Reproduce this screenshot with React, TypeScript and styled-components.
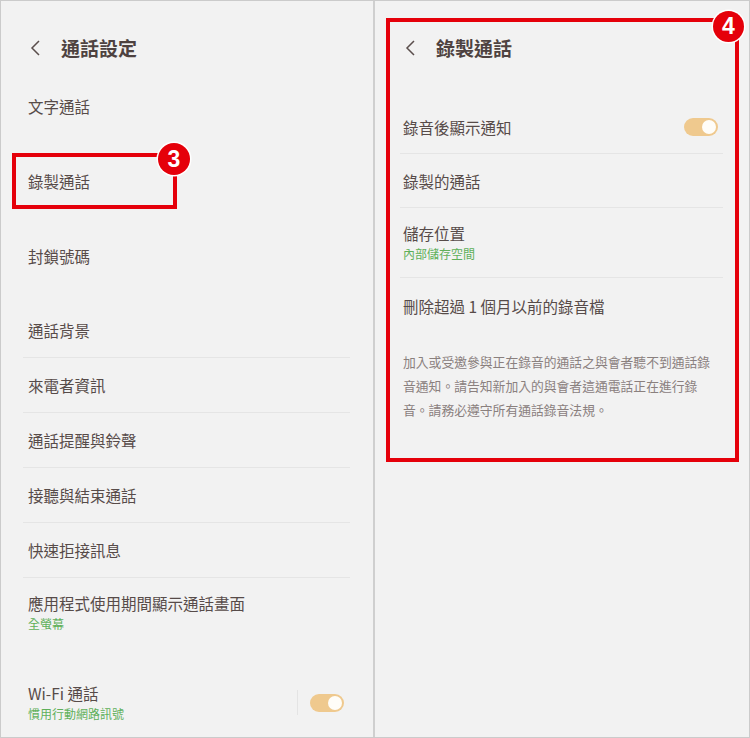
import React from 'react'
import styled, { createGlobalStyle } from 'styled-components'

const GlobalStyle = createGlobalStyle`
    html, body {
        margin: 0;
        padding: 0;
        background: #f2f2f2;
    }
    body {
        font-family: "Noto Sans CJK TC", "Noto Sans", sans-serif;
    }
`

interface RowProps {
    $h: number
    $line?: boolean
}

const leftItems = ['通話背景', '來電者資訊', '通話提醒與鈴聲', '接聽與結束通話', '快速拒接訊息']

const Back = () => (
    <svg width="11" height="16" viewBox="0 0 11 16">
        <polyline points="9,1 2,8 9,15" fill="none" stroke="#5a4e4c" strokeWidth="1.5" />
    </svg>
)

const Toggle = () => (
    <Track>
        <Knob />
    </Track>
)

const App = () => {
    return (
        <>
            <GlobalStyle />
            <Screen>
                <Panel>
                    <Header $pad={29}>
                        <Back />
                        <Title>通話設定</Title>
                    </Header>
                    <List>
                        <Group>
                            <Row $h={55}><Label>文字通話</Label></Row>
                        </Group>
                        <Group>
                            <Row $h={55}>
                                <Label>錄製通話</Label>
                                <Highlight />
                                <Badge $size={32} style={{ left: 135, top: -10 }}>3</Badge>
                            </Row>
                        </Group>
                        <Group>
                            <Row $h={55}><Label>封鎖號碼</Label></Row>
                        </Group>
                        <Group>
                            {leftItems.map(t => (
                                <Row key={t} $h={55} $line><Label>{t}</Label></Row>
                            ))}
                            <Row $h={70}>
                                <TextBlock>
                                    <Label>應用程式使用期間顯示通話畫面</Label>
                                    <Sub>全螢幕</Sub>
                                </TextBlock>
                            </Row>
                        </Group>
                        <Group>
                            <Row $h={69}>
                                <TextBlock>
                                    <Label>Wi-Fi 通話</Label>
                                    <Sub>慣用行動網路訊號</Sub>
                                </TextBlock>
                                <SwitchCell>
                                    <Toggle />
                                </SwitchCell>
                            </Row>
                        </Group>
                    </List>
                </Panel>
                <Split />
                <RightPanel>
                    <Frame>
                        <Badge $size={31} style={{ right: -9, top: -11 }}>4</Badge>
                        <Header $pad={15} $h={52}>
                            <Back />
                            <Title>錄製通話</Title>
                        </Header>
                        <RightList>
                            <Row $h={54} $line>
                                <Label>錄音後顯示通知</Label>
                                <Toggle />
                            </Row>
                            <Row $h={54} $line><Label>錄製的通話</Label></Row>
                            <Row $h={70} $line>
                                <TextBlock>
                                    <Label>儲存位置</Label>
                                    <Sub>內部儲存空間</Sub>
                                </TextBlock>
                            </Row>
                            <Row $h={56}><Label>刪除超過 1 個月以前的錄音檔</Label></Row>
                            <Note>
                                加入或受邀參與正在錄音的通話之與會者聽不到通話錄音通知。請告知新加入的與會者這通電話正在進行錄音。請務必遵守所有通話錄音法規。
                            </Note>
                        </RightList>
                    </Frame>
                </RightPanel>
            </Screen>
        </>
    )
}

export default App

const Screen = styled.div`
    display: flex;
    width: 750px;
    height: 738px;
    box-sizing: border-box;
    border: 1px solid #cbcbcb;
    background: #f2f2f2;
    overflow: hidden;
`

const Panel = styled.div`
    width: 372px;
    flex-shrink: 0;
    overflow: hidden;
`

const Split = styled.div`
    width: 2px;
    flex-shrink: 0;
    background: #cfcfcf;
`

const RightPanel = styled.div`
    flex: 1;
    padding: 17px 10px 0 11px;
`

const Header = styled.div<{ $pad: number, $h?: number }>`
    display: flex;
    align-items: center;
    gap: 20px;
    height: ${p => p.$h ?? 60}px;
    padding: ${p => p.$h ? 0 : 17}px 0 0 ${p => p.$pad}px;
    margin-bottom: ${p => p.$h ? 26 : 0}px;
`

const Title = styled.h1`
    margin: 0;
    font-size: 19px;
    font-weight: 700;
    color: #4e4240;
    line-height: 24px;
`

const List = styled.div`
    margin: 0 23px 0 22px;
`

const Group = styled.div`
    margin-bottom: 20px;

    &:last-child {
        margin-bottom: 0;
    }
`

const Row = styled.div<RowProps>`
    position: relative;
    display: flex;
    align-items: center;
    justify-content: space-between;
    box-sizing: border-box;
    height: ${p => p.$h}px;
    padding: 0 6px 0 5px;
    border-bottom: ${p => p.$line ? '1px solid #e5e5e5' : 'none'};
`

const Label = styled.div`
    font-size: 15.5px;
    line-height: 22px;
    color: #574b49;
    white-space: nowrap;
`

const TextBlock = styled.div`
    display: flex;
    flex-direction: column;
`

const Sub = styled.div`
    font-size: 12px;
    line-height: 20px;
    color: #5fb05a;
`

const SwitchCell = styled.div`
    display: flex;
    align-items: center;
    height: 25px;
    padding-left: 12px;
    border-left: 1px solid #e4e4e4;
`

const Track = styled.div`
    display: flex;
    align-items: center;
    justify-content: flex-end;
    width: 34px;
    height: 18px;
    box-sizing: border-box;
    padding-right: 2px;
    border-radius: 9px;
    background: #efc98e;
`

const Knob = styled.div`
    width: 14px;
    height: 14px;
    border-radius: 50%;
    background: #fffdf8;
`

const Highlight = styled.div`
    position: absolute;
    left: -11px;
    top: 0;
    width: 165px;
    height: 56px;
    box-sizing: border-box;
    border: 4px solid #e5000a;
`

const Badge = styled.div<{ $size: number }>`
    position: absolute;
    display: flex;
    align-items: center;
    justify-content: center;
    width: ${p => p.$size}px;
    height: ${p => p.$size}px;
    border-radius: 50%;
    background: #e5000a;
    box-shadow: 0 0 0 1.5px #fff;
    color: #fff;
    font-family: "Liberation Sans", Arial, sans-serif;
    font-weight: 700;
    font-size: 23px;
    line-height: 1;
    z-index: 2;
`

const Frame = styled.div`
    position: relative;
    box-sizing: border-box;
    border: 4px solid #e5000a;
    padding-bottom: 36px;
`

const RightList = styled.div`
    margin: 0 12px 0 10px;

    ${Row} {
        padding: 0 5px 0 3px;
    }
`

const Note = styled.p`
    margin: 16px 0 0 3px;
    max-width: 315px;
    font-size: 12.8px;
    line-height: 24px;
    color: #8a807e;
`
